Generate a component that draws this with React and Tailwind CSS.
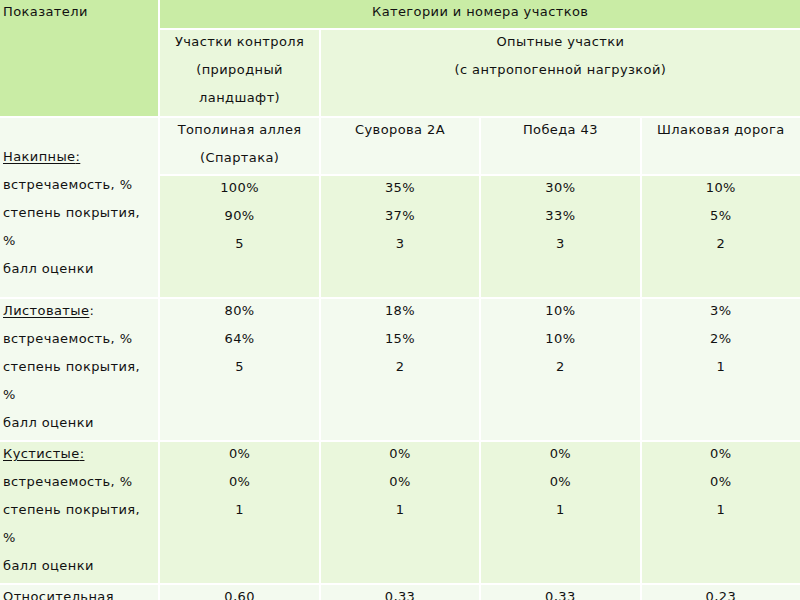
import React from "react";

const head = "bg-[#c9eca5]";
const band = "bg-[#eaf7dc]";
const pale = "bg-[#f3faef]";

const Lines = ({ items, className = "" }) => (
  <div className={className}>
    {items.map((t, i) => (
      <div key={i} className="h-[28px] leading-[23px] whitespace-nowrap">
        {t}
      </div>
    ))}
  </div>
);

const Label = ({ title, underColon }) => (
  <Lines
    items={[
      <span>
        <span className="underline underline-offset-2">
          {title}
          {underColon ? ":" : ""}
        </span>
        {underColon ? "" : ":"}
      </span>,
      "встречаемость, %",
      "степень покрытия,",
      "%",
      "балл оценки",
    ]}
  />
);

const Values = ({ v }) => <Lines items={v} className="text-center" />;

const data = [
  [["100%", "90%", "5"], ["35%", "37%", "3"], ["30%", "33%", "3"], ["10%", "5%", "2"]],
  [["80%", "64%", "5"], ["18%", "15%", "2"], ["10%", "10%", "2"], ["3%", "2%", "1"]],
  [["0%", "0%", "1"], ["0%", "0%", "1"], ["0%", "0%", "1"], ["0%", "0%", "1"]],
];

const totals = ["0,60", "0,33", "0,33", "0,23"];

export default function App() {
  return (
    <div className="w-[800px] h-[600px] overflow-hidden bg-white text-[#111111] text-[13px] tracking-[0.4px] font-['DejaVu_Sans',sans-serif]">
      <div className="grid grid-cols-5 grid-rows-[28px_86px_56px_121px_141px_141px_40px] gap-[2px]">
        {/* header */}
        <div className={`${head} row-span-2 pl-[3px]`}>
          <Lines items={["Показатели"]} />
        </div>
        <div className={`${head} col-span-4 text-center`}>
          <Lines items={["Категории и номера участков"]} />
        </div>
        <div className={`${band} text-center`}>
          <Lines items={["Участки контроля", "(природный", "ландшафт)"]} />
        </div>
        <div className={`${band} col-span-3 text-center`}>
          <Lines items={["Опытные участки", "(с антропогенной нагрузкой)"]} />
        </div>

        {/* sites */}
        <div className={`${pale} row-span-2 pl-[3px] pt-[27px]`}>
          <Label title="Накипные" underColon />
        </div>
        <div className={`${pale} text-center`}>
          <Lines items={["Тополиная аллея", "(Спартака)"]} />
        </div>
        <div className={`${pale} text-center`}>
          <Lines items={["Суворова 2А"]} />
        </div>
        <div className={`${pale} text-center`}>
          <Lines items={["Победа 43"]} />
        </div>
        <div className={`${pale} text-center`}>
          <Lines items={["Шлаковая дорога"]} />
        </div>

        {data[0].map((v, i) => (
          <div key={i} className={band}>
            <Values v={v} />
          </div>
        ))}

        <div className={`${pale} pl-[3px]`}>
          <Label title="Листоватые" />
        </div>
        {data[1].map((v, i) => (
          <div key={i} className={pale}>
            <Values v={v} />
          </div>
        ))}

        <div className={`${band} pl-[3px]`}>
          <Label title="Кустистые" underColon />
        </div>
        {data[2].map((v, i) => (
          <div key={i} className={band}>
            <Values v={v} />
          </div>
        ))}

        <div className={`${pale} pl-[3px]`}>
          <Lines items={["Относительная"]} />
        </div>
        {totals.map((t, i) => (
          <div key={i} className={`${pale} text-center`}>
            <Lines items={[t]} />
          </div>
        ))}
      </div>
    </div>
  );
}
